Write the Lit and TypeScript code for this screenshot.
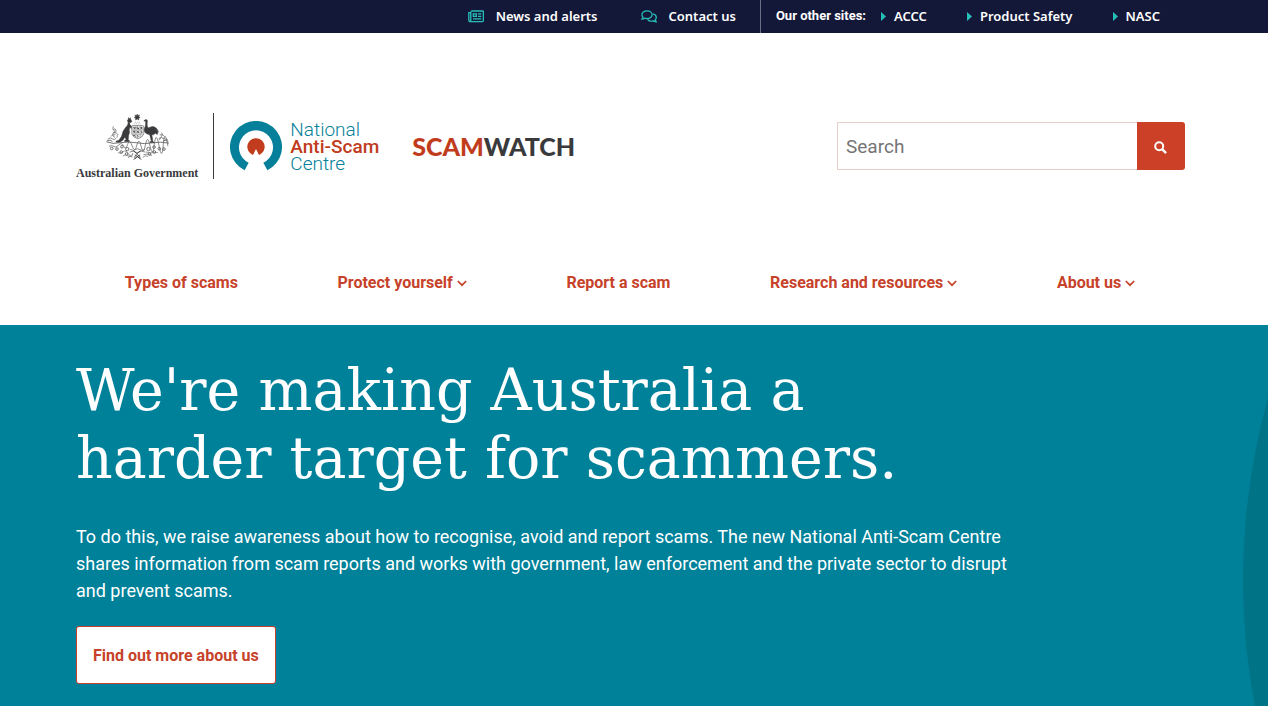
import { LitElement, html, css, svg } from "lit";
import { customElement } from "lit/decorators.js";

@customElement("sw-topbar")
class SwTopbar extends LitElement {
  static styles = css`
    :host { display: block; background: #131838; }
    .bar {
      display: flex; justify-content: flex-end; align-items: stretch;
      height: 33px; padding-right: 108px;
      font: 600 13px/33px "Noto Sans", sans-serif; color: #fff; white-space: nowrap;
    }
    .primary { display: flex; gap: 43px; padding-right: 24px; border-right: 1px solid #6b6f86; }
    .sites { display: flex; padding-left: 15px; }
    .label { font: 700 13px/32px Roboto, sans-serif; margin-right: 15px; }
    .links { display: flex; gap: 40px; }
    a { display: flex; align-items: center; gap: 8px; color: inherit; text-decoration: none; }
    .primary a { gap: 12px; }
    a:hover { text-decoration: underline; }
    svg { display: block; fill: none; stroke: #29bfb9; }
    .arrow { fill: #29bfb9; stroke: none; }
  `;
  render() {
    const sites = ["ACCC", "Product Safety", "NASC"];
    return html`
      <nav class="bar" aria-label="Utility">
        <div class="primary">
          <a href="#news">
            <svg width="16" height="14" viewBox="0 0 16 14" stroke-width="1.3">
              <path d="M3.2 1h11.2a1 1 0 0 1 1 1v8.6a1 1 0 0 1-1 1H2.2a1.4 1.4 0 0 1-1.4-1.4V2.6h2v7.6a1.2 1.2 0 0 1-1 1.2M2.8 2.6V1.4" />
              <path d="M5.3 3.8h3v2.6h-3zM10 3.8h3.3M10 6.4h3.3M5 8.9h8.3" />
            </svg>News and alerts</a>
          <a href="#contact">
            <svg width="16" height="14" viewBox="0 0 16 14" stroke-width="1.3">
              <path d="M6 .8c2.9 0 5.1 1.7 5.1 3.9S8.900 8.600 6 8.600c-.8 0-1.500-.1-2.100-.4C3 8.800 1.900 9.200.8 9.200c.6-.6 1-1.300 1.200-2C1.300 6.500.9 5.700.9 4.700.9 2.500 3.100.8 6 .8z" />
              <path d="M12 3.900c1.900.5 3.300 1.900 3.300 3.600 0 .9-.4 1.700-1.100 2.300.2.800.6 1.500 1.100 2-1.100 0-2.100-.3-3-.9-2.300.6-4.700-.1-5.700-1.600" />
            </svg>Contact us</a>
        </div>
        <div class="sites">
          <span class="label">Our other sites:</span>
          <div class="links">
            ${sites.map((s) => html`<a href="#site"><svg class="arrow" width="5" height="9" viewBox="0 0 5 9"><path d="M0 0l5 4.500L0 9z" /></svg>${s}</a>`)}
          </div>
        </div>
      </nav>`;
  }
}

const ink = "#3a3a3c";

const crest = svg`
  <g fill=${ink} stroke=${ink} stroke-width="1.5">
    <path d="M229 43l2 5 5-2-2 5 4 3-5 1 1 6-5-3-5 3 1-6-5-1 4-3-2-5 5 2z" />
    <path d="M203 54l3 4 2-4 2 6 3 5-2 3-5 1 1 6 5 5 2 6-3 1-4-5-2 9 1 8-3 9-1 12 4 5-3 2-12-1 0-3 5-3-4-7-7 10-9 5-10 0-1-3 9-3 8-12 4-14 7-11 7-8 2-10-3-3 3-5z" />
    <path d="M250 63l4-3q6-1 6 5l-1 8 1 9q3 4 8 1 9-4 15 0 8 4 9 14l-2 8-6-4-6 5-5 0 2 9 1 11 5 2-1 2-12-1 0-2 4-2-3-11-2-8-9-3q-9-5-8-15l4-9 1-14-6-1z" />
  </g>
  <g fill="none" stroke="#4a4a4c" stroke-width="2.3">
    <path d="M214 78h32q4 1 3 5v20q-3 11-18 15-15-4-18-15V82z" stroke="#777" fill="#eee" />
    <path d="M213 91h36M213 104h34M225 79v36M238 79v36" stroke="#999" />
    <path d="M218 82l3 6 2-6M230 81q-3 4 0 7t4-4M242 82v6m-3-3h6M217 96h5m-2-3v8M228 94l6 6m0-6l-6 6M241 94q5 2 1 7M217 108q4-3 6 3M230 107q3 3 0 7" stroke-width="3" />
    <path d="M219 73h20M222 68h15" stroke="#999" stroke-dasharray="3 3" />
    <path d="M136 127q20 8 40 3 26-5 52 0 24 5 48 0 24-4 49 1M138 124q10-5 16 2M307 124q8-4 16 2" />
    <path d="M158 80q-6 6 0 10t-2 12q-4 8 6 12M155 91q6-6 10 0t-7 9q8-2 12 4M163 106q-10-3-13 5M172 104q-6 4-3 10M140 119q8-7 14-1t12-2M302 99q6 4 1 11t-7 12M297 106q9-3 14 4M294 117q8-5 16 0t12 4M287 91q7 0 6 7" stroke="#6a6a6a" />
    <circle cx="152" cy="147" r="4" /><circle cx="168" cy="149" r="4" /><circle cx="183" cy="142" r="4" />
    <circle cx="181" cy="158" r="4" /><circle cx="199" cy="149" r="5" /><circle cx="197" cy="164" r="4" />
    <circle cx="263" cy="149" r="5" /><circle cx="280" cy="143" r="4" /><circle cx="266" cy="164" r="4" />
    <circle cx="281" cy="158" r="4" /><circle cx="296" cy="148" r="4" /><circle cx="310" cy="149" r="4" />
    <path d="M144 141q8-6 14 0t15-4 15 3 12-5 14 5 14-3 13 4 13-5 14 4 13-5 14 4 13-4 14 5M208 150q9 7 22-2 13 9 22 2M206 158q10-6 24 2 12-8 24-2" stroke="#666" />
    <path d="M171 160q8 4 16-3t17 8 12-4M186 170q7-7 14-1t14-3M201 175q7-7 14-2M246 174q8-8 16-3M248 166q10-5 26 2M256 158q12 4 36 1" stroke="#777" />
    <path d="M219 181q5-3 3-9l7-7 8 7q-1 6 4 9M222 166l16 12M238 166l-16 12M218 154l10 9 11-9" stroke-width="3" />
  </g>`;

@customElement("sw-header")
class SwHeader extends LitElement {
  static styles = css`
    :host { display: block; background: #fff; }
    .row {
      display: flex; justify-content: space-between; align-items: center;
      padding: 80px 83px 92px 76px;
    }
    .logos { display: flex; align-items: center; color: inherit; text-decoration: none; }
    .gov { display: flex; flex-direction: column; align-items: center; padding-right: 15px; height: 66px; border-right: 1px solid #3a3a3c; }
    .gov span { font: 700 12px/14px "Liberation Serif", serif; color: #3a3a3c; margin-top: 6px; white-space: nowrap; }
    .gov svg { margin-top: 1px; }
    svg { display: block; flex: none; }
    .mark { margin: 0 8px 0 16px; }
    .nasc { font: 300 19px/17px Roboto, sans-serif; color: #06809a; display: grid; white-space: nowrap; }
    .nasc strong { font-weight: 500; color: #c03c1c; }
    .word { font: 900 25px/30px Lato, sans-serif; color: #3a3a3c; margin-left: 33px; }
    .word em { font-style: normal; color: #c03c1c; }
    form { display: flex; width: 348px; height: 48px; }
    input {
      flex: 1; min-width: 0; box-sizing: border-box; margin: 0; padding: 2px 8px 0;
      border: 1px solid #e8cfc9; border-right: 0; border-radius: 0; outline-color: #cb4027;
      font: 400 19px/24px Roboto, sans-serif; color: #333; background: #fff;
    }
    input::placeholder { color: #757575; opacity: 1; }
    form button {
      width: 48px; padding: 2px 1px 0 0; border: 0; border-radius: 0 3px 3px 0; background: #cb4027;
      display: grid; place-items: center; cursor: pointer;
    }
    .menu { display: flex; justify-content: space-around; padding: 0 83px 30px 75px; }
    .menu a {
      display: flex; align-items: center; gap: 4px; white-space: nowrap;
      font: 700 16px/24px Roboto, sans-serif; color: #c7422a; text-decoration: none;
    }
    .menu a:hover { text-decoration: underline; }
  `;
  items = [
    { label: "Types of scams", sub: false },
    { label: "Protect yourself", sub: true },
    { label: "Report a scam", sub: false },
    { label: "Research and resources", sub: true },
    { label: "About us", sub: true },
  ];
  render() {
    return html`
      <header>
        <div class="row">
          <a class="logos" href="#home">
            <div class="gov">
              <svg width="63" height="46" viewBox="135 43 190 139" aria-hidden="true">${crest}</svg>
              <span>Australian Government</span>
            </div>
            <svg class="mark" width="52" height="50" viewBox="60 63 156 150" aria-hidden="true">
              <path fill="#06809a" d="M104 211A78 78 0 1 1 172 211L160 188A51 51 0 1 0 116 188Z" />
              <path fill="#c03c1c" d="M125 163A26 26 0 1 1 151 163L147 165 138 147 129 165Z" />
            </svg>
            <div class="nasc"><span>National</span><strong>Anti-Scam</strong><span>Centre</span></div>
            <div class="word"><em>SCAM</em>WATCH</div>
          </a>
          <form role="search" @submit=${(e: Event) => e.preventDefault()}>
            <input type="search" placeholder="Search" aria-label="Search" />
            <button type="submit" aria-label="Submit search">
              <svg width="13" height="13" viewBox="0 0 13 13" fill="none" stroke="#fff">
                <circle cx="5.200" cy="5.200" r="4" stroke-width="2" />
                <path d="M8.300 8.300l3.800 3.800" stroke-width="2.400" />
              </svg>
            </button>
          </form>
        </div>
        <nav class="menu" aria-label="Main">
          ${this.items.map((i) => html`<a href="#section">${i.label}${i.sub
            ? html`<svg width="10" height="7" viewBox="0 0 10 7" fill="none" stroke="#c7422a" stroke-width="1.700"><path d="M.8 1l4.200 4.200L9.200 1" /></svg>`
            : ""}</a>`)}
        </nav>
      </header>`;
  }
}

@customElement("sw-hero")
class SwHero extends LitElement {
  static styles = css`
    :host { display: block; flex: 1; position: relative; overflow: hidden; background: #00819a; color: #fff; }
    .disc {
      position: absolute; left: calc(100% - 25px); top: -420px;
      width: 1350px; height: 1350px; border-radius: 50%; background: #007386;
    }
    .inner { position: relative; padding: 31px 76px 22px; }
    h1 { margin: 0; max-width: 900px; font: 400 57px/68px "DejaVu Serif", serif; }
    p { margin: 31px 0 22px; max-width: 940px; font: 400 18px/27px Roboto, sans-serif; }
    .cta {
      display: inline-block; padding: 17px 16px 15px; border: 1px solid #c7422a; border-radius: 3px;
      background: #fff; color: #c7422a; font: 700 16px/24px Roboto, sans-serif; text-decoration: none;
    }
  `;
  render() {
    return html`
      <div class="disc"></div>
      <div class="inner">
        <h1>We're making Australia a harder target for scammers.</h1>
        <p>To do this, we raise awareness about how to recognise, avoid and report scams. The new National Anti-Scam Centre shares information from scam reports and works with government, law enforcement and the private sector to disrupt and prevent scams.</p>
        <a class="cta" href="#about">Find out more about us</a>
      </div>`;
  }
}

@customElement("app-root")
class AppRoot extends LitElement {
  static styles = css`
    :host { display: flex; flex-direction: column; min-height: 100vh; }
  `;
  render() {
    return html`<sw-topbar></sw-topbar><sw-header></sw-header><sw-hero></sw-hero>`;
  }
}
